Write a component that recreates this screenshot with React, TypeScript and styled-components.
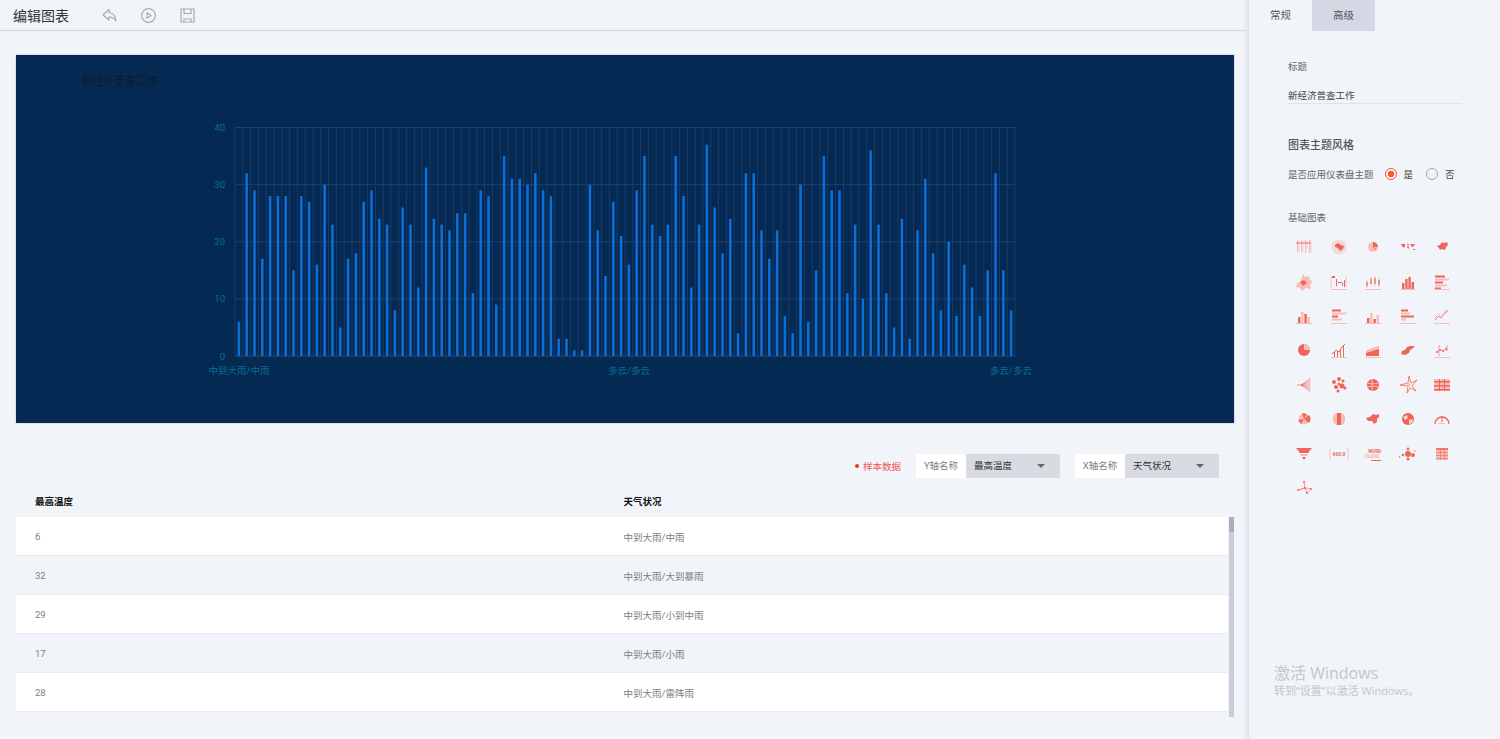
import React from 'react'
import styled, { createGlobalStyle } from 'styled-components'

const GlobalStyle = createGlobalStyle`
  html, body, #root {
    margin: 0;
    height: 100%;
  }
  body {
    background: #f1f4f9;
    font-family: Roboto, "Noto Sans CJK SC", sans-serif;
    overflow: hidden;
  }
`

const Page = styled.div`
  display: flex;
  width: 1500px;
  height: 739px;
  overflow: hidden;
`

const Main = styled.main`
  display: flex;
  flex-direction: column;
  width: 1249px;
  flex-shrink: 0;
`

const Header = styled.header`
  display: flex;
  align-items: center;
  height: 30px;
  margin-right: 4px;
  padding-left: 13px;
  border-bottom: 1px solid #d3d6dd;
`

const PageTitle = styled.h1`
  width: 89px;
  margin: 0;
  font-size: 14px;
  font-weight: 400;
  color: #333;
`

const ToolButton = styled.span`
  display: flex;
  width: 39px;
  color: #aaa;
`

const Content = styled.div`
  display: flex;
  flex-direction: column;
  padding: 24px 15px 0 16px;
`

const ChartCard = styled.section`
  height: 368px;
  background: #042a53;
  box-shadow: 0 0 2px rgba(0, 0, 0, 0.25);
`

const ChartTitle = styled.div`
  height: 52px;
  padding: 19px 0 0 65px;
  box-sizing: border-box;
  font-size: 11px;
  line-height: 15px;
  color: #0b1a2c;
`

const ChartSvg = styled.svg`
  display: block;
`

const AxisText = styled.text`
  font-size: 9.5px;
  fill: #0a6c94;
`

const FieldBar = styled.div`
  display: flex;
  align-items: center;
  justify-content: flex-end;
  margin-top: 31px;
  padding-right: 15px;
  height: 24px;
`

const SampleTag = styled.span`
  display: flex;
  align-items: center;
  gap: 4px;
  margin-right: 15px;
  font-size: 9.5px;
  color: #f4574f;
  &::before {
    content: '';
    width: 4px;
    height: 4px;
    border-radius: 50%;
    background: #f5331f;
  }
`

const Field = styled.div`
  display: flex;
  height: 24px;
  margin-left: 15px;
  font-size: 9.5px;
  line-height: 24px;
  &:first-of-type {
    margin-left: 0;
  }
`

const FieldLabel = styled.span`
  width: 50px;
  background: #fff;
  color: #808080;
  text-align: center;
`

const FieldSelect = styled.span`
  display: flex;
  align-items: center;
  justify-content: space-between;
  width: 94px;
  padding: 0 15px 0 8px;
  box-sizing: border-box;
  background: #d8dbe2;
  color: #333;
  &::after {
    content: '';
    border: 4px solid transparent;
    border-top: 4px solid #666;
    border-bottom: 0;
    width: 0;
    height: 0;
  }
`

const TableHead = styled.div`
  display: grid;
  grid-template-columns: 588.5px 1fr;
  height: 31px;
  margin-top: 7px;
  padding: 1px 19px 0;
  font-size: 9.5px;
  font-weight: 700;
  line-height: 32px;
  color: #111;
`

const TableBody = styled.div`
  display: flex;
  gap: 1px;
`

const Rows = styled.div`
  width: 1213px;
`

const Row = styled.div<{ $striped: boolean }>`
  display: grid;
  grid-template-columns: 588.5px 1fr;
  align-items: center;
  height: 37px;
  padding: 1px 19px 0;
  border-bottom: 1px solid #e8ebf2;
  background: ${p => (p.$striped ? 'transparent' : '#fff')};
  font-size: 9.5px;
  color: #7d7d7d;
`

const ScrollTrack = styled.div`
  width: 5px;
  height: 200px;
  background: #c9cdd7;
`

const ScrollThumb = styled.div`
  height: 15px;
  background: #a9aeba;
`

const Panel = styled.aside`
  position: relative;
  flex: 1;
  box-shadow: -2px 0 5px rgba(60, 70, 90, 0.14);
`

const Tabs = styled.div`
  display: flex;
  height: 31px;
`

const Tab = styled.div<{ $active?: boolean }>`
  width: 63px;
  font-size: 10.5px;
  line-height: 31px;
  text-align: center;
  color: #555;
  background: ${p => (p.$active ? 'transparent' : '#d3d8e4')};
`

const PanelBody = styled.div`
  padding: 29px 0 0 39px;
`

const SmallLabel = styled.div`
  font-size: 9.5px;
  line-height: 14px;
  color: #666;
`

const TitleInput = styled.div`
  width: 174px;
  height: 15px;
  margin-top: 14px;
  border-bottom: 1px solid #e0e3ea;
  font-size: 9.5px;
  line-height: 16px;
  color: #444;
`

const SectionTitle = styled.h2`
  margin: 34px 0 0;
  font-size: 11px;
  font-weight: 500;
  line-height: 16px;
  color: #555;
`

const RadioRow = styled.div`
  display: flex;
  align-items: center;
  height: 14px;
  margin-top: 13px;
  font-size: 9.5px;
  color: #666;
`

const RadioOption = styled.span`
  display: flex;
  align-items: center;
  gap: 7px;
  margin-left: 13px;
  color: #444;
  &:first-of-type {
    margin-left: 11px;
  }
`

const RadioMark = styled.i<{ $checked?: boolean }>`
  display: block;
  width: 12px;
  height: 12px;
  box-sizing: border-box;
  border-radius: 50%;
  border: 1px solid ${p => (p.$checked ? '#ff5a2c' : '#aaa')};
  background: ${p => (p.$checked ? 'radial-gradient(circle, #ff5a2c 0 3px, transparent 3.5px)' : 'transparent')};
`

const BaseLabel = styled(SmallLabel)`
  margin-top: 30px;
`

const IconGrid = styled.div`
  display: grid;
  grid-template-columns: repeat(5, 34.5px);
  grid-auto-rows: 34.4px;
  margin: 5px 0 0 -1px;
`

const IconCell = styled.span`
  display: flex;
  align-items: center;
  justify-content: center;
`

const IconText = styled.text<{ $size: number }>`
  font-size: ${p => p.$size}px;
  font-weight: 700;
  fill: #f0655a;
`

const Watermark = styled.div`
  position: absolute;
  left: 25px;
  top: 664px;
  color: #c3c6cc;
  font-family: "Open Sans", "Noto Sans CJK SC", sans-serif;
  font-size: 11px;
  line-height: 15px;
`

const WatermarkTitle = styled.div`
  font-size: 16px;
  line-height: 19px;
`

const temps = [
  6, 32, 29, 17, 28, 28, 28, 15, 28, 27, 16, 30, 23, 5, 17, 18, 27, 29, 24, 23, 8, 26, 23, 12, 33, 24, 23, 22, 25, 25,
  11, 29, 28, 9, 35, 31, 31, 30, 32, 29, 28, 3, 3, 1, 1, 30, 22, 14, 27, 21, 16, 29, 35, 23, 21, 23, 35, 28, 12, 23, 37,
  26, 18, 24, 4, 32, 32, 22, 17, 22, 7, 4, 30, 6, 15, 35, 29, 29, 11, 23, 10, 36, 23, 11, 5, 24, 3, 22, 31, 18, 8, 20,
  7, 16, 12, 7, 15, 32, 15, 8,
]

const rows = [
  ['6', '中到大雨/中雨'],
  ['32', '中到大雨/大到暴雨'],
  ['29', '中到大雨/小到中雨'],
  ['17', '中到大雨/小雨'],
  ['28', '中到大雨/雷阵雨'],
]

const plot = { left: 219, right: 999, top: 20.5, bottom: 249 }
const slot = (plot.right - plot.left) / temps.length
const yOf = (v: number) => plot.bottom - (v / 40) * (plot.bottom - plot.top)

const BarChart = () => (
  <ChartSvg width={1218} height={316}>
    {temps.map((_, i) => (
      <line key={i} x1={plot.left + i * slot} x2={plot.left + i * slot} y1={plot.top} y2={plot.bottom} stroke="#1a3a66" />
    ))}
    <line x1={plot.right} x2={plot.right} y1={plot.top} y2={plot.bottom} stroke="#1a3a66" />
    {[0, 10, 20, 30, 40].map(v => (
      <React.Fragment key={v}>
        <line x1={plot.left} x2={plot.right} y1={yOf(v)} y2={yOf(v)} stroke={v === 0 ? '#2a4a78' : '#1f3f6c'} />
        <AxisText x={209} y={yOf(v) + 3.5} textAnchor="end">
          {v}
        </AxisText>
      </React.Fragment>
    ))}
    {temps.map((v, i) => (
      <rect key={i} x={plot.left + (i + 0.5) * slot - 1.25} y={yOf(v)} width={2.5} height={plot.bottom - yOf(v)} fill="#0b70d9" />
    ))}
    <AxisText x={223} y={266.5} textAnchor="middle">中到大雨/中雨</AxisText>
    <AxisText x={613} y={266.5} textAnchor="middle">多云/多云</AxisText>
    <AxisText x={995} y={266.5} textAnchor="middle">多云/多云</AxisText>
  </ChartSvg>
)

const R = '#f0655a'
const L = '#f8bdb7'
const Base = () => <rect x="2" y="17" width="16" height="1" fill={L} />
const Bars = ({ h, light }: { h: number[]; light?: boolean }) => (
  <>
    {h.map((v, i) => (
      <rect key={i} x={4 + i * 3.2} y={17 - v} width="2.4" height={v} fill={light && i % 2 ? L : R} />
    ))}
    <Base />
  </>
)
const HBars = ({ w }: { w: number[] }) => (
  <>
    {w.map((v, i) => (
      <rect key={i} x="3" y={3.5 + i * 3} width={v} height="2" fill={i % 2 ? L : R} />
    ))}
    <Base />
  </>
)
const Blob = ({ d }: { d: string }) => <path d={d} fill={R} />

const chartIcons: React.ReactNode[] = [
  <>
    {[3, 7, 11, 15].map(x => <rect key={x} x={x} y="3" width="1.2" height="13" fill={L} />)}
    <path d="M2 6h15M5 4v10M9 4v10M13 4v8M17 4v11" stroke={L} strokeWidth=".7" fill="none" />
    <path d="M2 6h15" stroke={R} strokeWidth=".8" />
  </>,
  <>
    <circle cx="10" cy="10" r="7.5" fill={L} opacity=".5" />
    <path d="M6 8l3-2 3 2 3 1-1 3-3 2-2-3-3-1z" fill={R} />
  </>,
  <>
    <circle cx="10" cy="10" r="5" fill={L} />
    <path d="M10 5a5 5 0 0 1 5 5h-5z" fill={R} />
    <path d="M10 10l3 3" stroke={R} />
  </>,
  <path d="M3 7h4v2l-1 2-2-2zM9 7h2v1H9zM9 9h2l-.5 3-1-1zM12 7h5l-1 2-2 1zM15 12h2v1h-2z" fill={R} />,
  <Blob d="M5 9l3-1 2-3 2 1 3-1 1 3-2 2-1 3-3-1-2 1-1-2z" />,
  <>
    <path d="M9 2l2 3 4-1 1 4 3 1-3 4 1 4-5-1-4 3-2-3-4-1 1-4 3-1z" fill={L} />
    <path d="M6 10l4-2 3 3-4 3z" fill={R} />
  </>,
  <>
    <path d="M2 4v11M17 5v10" stroke={L} fill="none" />
    <path d="M3 4h3v2H3zM7 7h1v7H7zM9 10h4v1H9zM13 11h1v3h-1zM15 8h1v7h-1z" fill={R} />
    <Base />
  </>,
  <>
    <path d="M3 10h2v4H3zM7 7h2v5H7zM11 6h2v6h-2zM15 8h2v5h-2z" fill={R} />
    <path d="M4 8v8M8 5v9M12 4v10M16 6v9" stroke={L} />
    <Base />
  </>,
  <Bars h={[6, 10, 12, 7]} />,
  <HBars w={[10, 14, 8, 12, 6]} />,
  <Bars h={[6, 11, 9, 6]} light />,
  <HBars w={[9, 14, 6, 10]} />,
  <Bars h={[5, 10, 4, 8]} light />,
  <HBars w={[7, 9, 13, 5]} />,
  <>
    <path d="M3 14l4-4 2 2 4-5 3-2" stroke={R} strokeWidth=".8" fill="none" />
    <path d="M3 12l4-4 2 2 4-5 3-1" stroke={L} strokeWidth=".8" fill="none" />
    <Base />
  </>,
  <>
    <circle cx="10" cy="10" r="6" fill={R} />
    <path d="M10 4a6 6 0 0 1 6 6h-6z" fill={L} />
  </>,
  <>
    <path d="M3 14l4-4 3 2 3-5 3-3" stroke={R} fill="none" />
    <path d="M5 11h1v6H5zM8 11h1v6H8zM11 9h1v8h-1zM14 6h1v11h-1z" fill={R} />
    <Base />
  </>,
  <>
    <path d="M3 16v-5l13-5v10z" fill={R} />
    <path d="M3 11l13-5v3L3 13z" fill={L} />
    <Base />
  </>,
  <Blob d="M3 14l1-3 3-1 2-3 3-1 5 0-3 3-2 1-1 3-4 2z" />,
  <>
    <circle cx="5" cy="12" r="1" fill={R} />
    <circle cx="8" cy="10" r="1" fill={R} />
    <circle cx="11" cy="11" r="1" fill={R} />
    <circle cx="14" cy="9" r="1" fill={R} />
    <path d="M5 12l3-2 3 1 3-2M7 5v11M15 5v6" stroke={R} strokeWidth=".6" fill="none" />
    <Base />
  </>,
  <>
    <path d="M3 10h4l9-6M7 10l9-3M7 10h9M7 10l9 3M7 10l9 6" stroke={R} strokeWidth=".7" fill="none" />
    <path d="M15.500 3v14" stroke={L} strokeWidth="1.500" />
  </>,
  <>
    {[[10, 4, 2], [5, 7, 2], [14, 6, 1.5], [7, 12, 2], [13, 11, 2.5], [9, 16, 1.5], [16, 13, 1.5], [10, 9, 1.5]].map(([x, y, r]) => (
      <circle key={`${x}-${y}`} cx={x} cy={y} r={r} fill={R} />
    ))}
  </>,
  <>
    <circle cx="10" cy="10" r="6" fill={R} />
    <path d="M5 8c3 1 7 1 10 0M5 12c3-1 7-1 10 0M9 4v12" stroke="#f7c9c4" strokeWidth=".9" fill="none" />
  </>,
  <>
    <path d="M11 1l-1 7-8 2 8 1-1 7 3-5 6 3-4-5 5-6-6 3z" fill="none" stroke={R} strokeWidth=".8" />
    <circle cx="10.500" cy="10" r="2" fill={L} />
  </>,
  <>
    <rect x="2" y="4" width="16" height="12" fill={L} />
    <path d="M2 6h16v1.500H2zM2 10h16v1.500H2zM2 14h16v1.500H2zM7 4h1v12H7zM12 4h1v12h-1z" fill={R} />
  </>,
  <>
    <circle cx="10" cy="10" r="5.500" fill={L} />
    <path d="M10 10l5-4a6 6 0 0 1 0 8zM10 10l-3 5-3-4zM10 10L8 4l5 1z" fill={R} />
  </>,
  <>
    <path d="M7 4h6l3 3v6l-3 3H7l-3-3V7z" fill={L} />
    <path d="M8 4h4v12H8z" fill={R} />
  </>,
  <Blob d="M3 9l4-1 3-3 3 1 3-1 0 3-2 2 0 3-3 2-2-3-4 0z" />,
  <>
    <circle cx="10" cy="10" r="6" fill={R} />
    <path d="M5 8l4-2 1 3-3 2zM11 11l4-1-1 4-3 1z" fill="#f9d3cf" />
  </>,
  <>
    <path d="M3 15a7 7 0 1 1 14 0" fill="none" stroke={R} strokeWidth="1.400" />
    <path d="M10 7v6" stroke={R} />
    <rect x="7" y="14" width="6" height="1" fill={L} />
  </>,
  <>
    <path d="M2 4h16L14 9H6z" fill={R} />
    <path d="M5.500 10h9l-1.500 2h-6z" fill={L} />
    <path d="M8 13h4l-2 3z" fill={R} />
  </>,
  <>
    <path d="M2 4c-2 4-2 8 0 12M18 4c2 4 2 8 0 12" stroke={L} fill="none" />
    <IconText $size={5} x="10" y="12" textAnchor="middle">965.0</IconText>
  </>,
  <>
    <IconText $size={4.5} x="18" y="9" textAnchor="end">WORD</IconText>
    <IconText $size={4.5} x="2" y="14" opacity={0.5}>CLOUD</IconText>
    <rect x="8" y="16" width="10" height="1" fill={R} />
  </>,
  <>
    <circle cx="10" cy="10" r="3" fill={R} />
    <circle cx="15" cy="11" r="2" fill={R} />
    <circle cx="5" cy="11" r="1.200" fill={R} />
    <circle cx="10" cy="5" r="1.400" fill={R} />
    <circle cx="17" cy="7" r="1.200" fill={L} />
    <circle cx="10" cy="15" r="1.500" fill={R} />
    <circle cx="1.500" cy="13" r=".8" fill={R} />
  </>,
  <>
    <rect x="4" y="4" width="12" height="12" fill={L} />
    <path d="M4 4h12v2H4zM4 8h12v.7H4zM4 11h12v.7H4zM4 14h12v.7H4zM8 6h.7v10H8zM12 6h.7v10H12z" fill={R} opacity=".8" />
  </>,
  <>
    <path d="M10 4l1 6-7 2 7-2 6 1-4 4-2-5" stroke={R} strokeWidth=".6" fill="none" />
    {[[10, 4], [11, 10], [4, 12], [17, 11], [13, 15]].map(([x, y]) => (
      <circle key={`${x}-${y}`} cx={x} cy={y} r="1" fill={R} />
    ))}
  </>,
]

const BackIcon = () => (
  <svg width="15" height="15" viewBox="0 0 15 15" fill="none" stroke="currentColor" strokeWidth="1.200" strokeLinejoin="round">
    <path d="M7 1.500L1 7l6 5v-3c3 0 5 .8 7 4-.5-5-3-8-7-8.500z" />
  </svg>
)

const PlayIcon = () => (
  <svg width="15" height="15" viewBox="0 0 15 15" fill="none" stroke="currentColor" strokeWidth="1.200" strokeLinejoin="round">
    <circle cx="7.500" cy="7.500" r="6.800" />
    <path d="M6 4.800l4 2.700-4 2.700z" />
  </svg>
)

const SaveIcon = () => (
  <svg width="15" height="15" viewBox="0 0 15 15" fill="none" stroke="currentColor" strokeWidth="1.200">
    <path d="M1 1h13v13H1zM4 1v4.500h7V1M4 14v-3h7v3" />
  </svg>
)

const App = () => (
  <Page>
    <GlobalStyle />
    <Main>
      <Header>
        <PageTitle>编辑图表</PageTitle>
        <ToolButton><BackIcon /></ToolButton>
        <ToolButton><PlayIcon /></ToolButton>
        <ToolButton><SaveIcon /></ToolButton>
      </Header>
      <Content>
        <ChartCard>
          <ChartTitle>新经济普查工作</ChartTitle>
          <BarChart />
        </ChartCard>
        <FieldBar>
          <SampleTag>样本数据</SampleTag>
          <Field>
            <FieldLabel>Y轴名称</FieldLabel>
            <FieldSelect>最高温度</FieldSelect>
          </Field>
          <Field>
            <FieldLabel>X轴名称</FieldLabel>
            <FieldSelect>天气状况</FieldSelect>
          </Field>
        </FieldBar>
        <TableHead>
          <span>最高温度</span>
          <span>天气状况</span>
        </TableHead>
        <TableBody>
          <Rows>
            {rows.map(([temp, weather], i) => (
              <Row key={temp} $striped={i % 2 === 1}>
                <span>{temp}</span>
                <span>{weather}</span>
              </Row>
            ))}
          </Rows>
          <ScrollTrack>
            <ScrollThumb />
          </ScrollTrack>
        </TableBody>
      </Content>
    </Main>
    <Panel>
      <Tabs>
        <Tab $active>常规</Tab>
        <Tab>高级</Tab>
      </Tabs>
      <PanelBody>
        <SmallLabel>标题</SmallLabel>
        <TitleInput>新经济普查工作</TitleInput>
        <SectionTitle>图表主题风格</SectionTitle>
        <RadioRow>
          是否应用仪表盘主题
          <RadioOption><RadioMark $checked />是</RadioOption>
          <RadioOption><RadioMark />否</RadioOption>
        </RadioRow>
        <BaseLabel>基础图表</BaseLabel>
        <IconGrid>
          {chartIcons.map((icon, i) => (
            <IconCell key={i}>
              <svg width="20" height="20" viewBox="0 0 20 20">{icon}</svg>
            </IconCell>
          ))}
        </IconGrid>
      </PanelBody>
      <Watermark>
        <WatermarkTitle>激活 Windows</WatermarkTitle>
        转到“设置”以激活 Windows。
      </Watermark>
    </Panel>
  </Page>
)

export default App
